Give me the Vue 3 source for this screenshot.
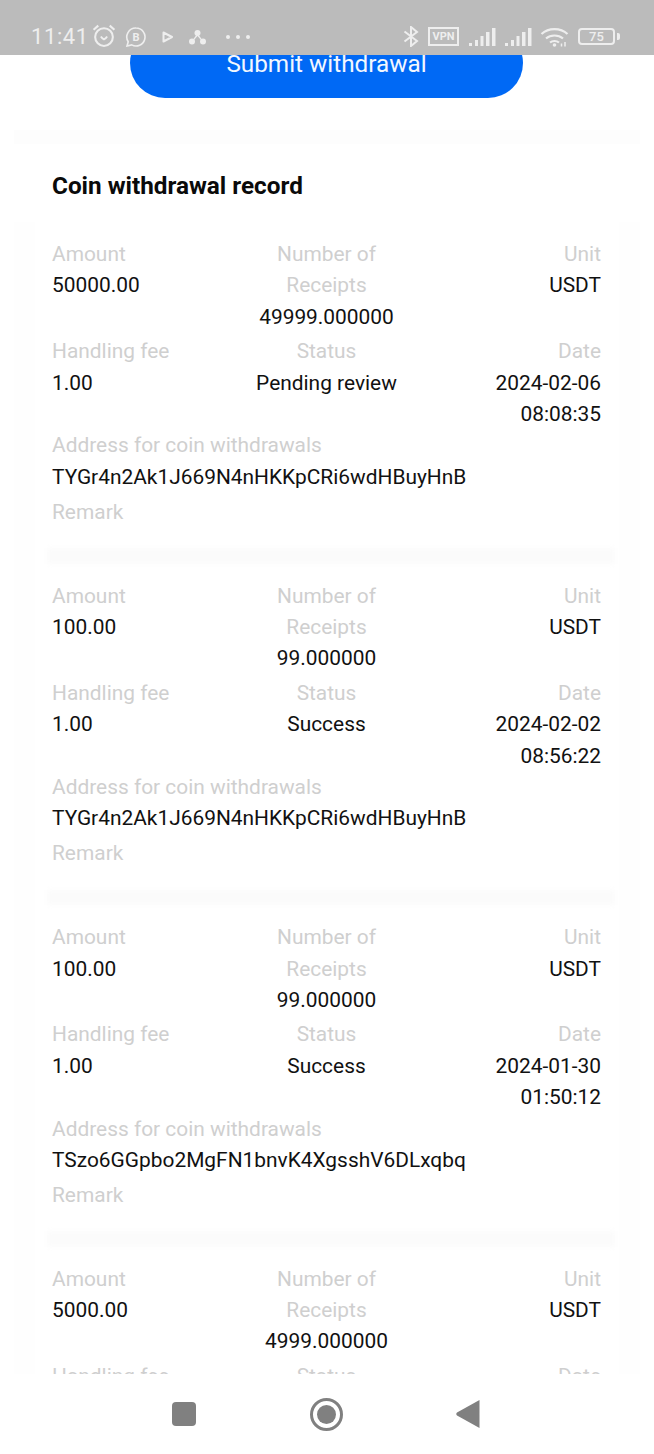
<template>
  <div class="phone">
    <header class="status-bar">
      <span class="time">11:41</span>
      <svg class="ic alarm" width="26" height="25" viewBox="0 0 24 24" fill="none" stroke="#eee" stroke-width="2">
        <circle cx="12" cy="13.5" r="8.5" />
        <path d="M2 6.5 6.5 2.5M22 6.5 17.5 2.5" />
        <path d="M9 13c1 1.6 2 2.4 3 2.8 1-.4 2-1.2 3-2.8" stroke-width="1.8" />
      </svg>
      <svg class="ic bubble" width="22" height="20" viewBox="0 0 22 20" fill="none" stroke="#eee" stroke-width="1.6">
        <path d="M11 1a9 9 0 1 1-4.3 16.9L2 19l1.200-4.200A9 9 0 0 1 11 1z" />
        <text x="11" y="13.500" text-anchor="middle" class="bubble-b">B</text>
      </svg>
      <svg class="ic play" width="12" height="12" viewBox="0 0 12 12" fill="none" stroke="#eee" stroke-width="2">
        <path d="M1.500 1.500 10 6 1.500 10.500z" stroke-linejoin="round" />
      </svg>
      <svg class="ic nodes" width="17" height="16" viewBox="0 0 17 16" fill="#eee">
        <circle cx="8.500" cy="4" r="3" />
        <circle cx="3" cy="12.500" r="3" />
        <circle cx="14" cy="12.500" r="3" />
        <path d="M8 5 3 12l.8.500L8.500 7l4.700 5.500.8-.500L9 5z" />
      </svg>
      <span class="dots">
        <i></i><i></i><i></i>
      </span>
      <span class="spacer"></span>
      <svg class="ic" width="16" height="21" viewBox="0 0 16 21" fill="none" stroke="#eee" stroke-width="2">
        <path d="M1.500 5.500 14 15l-6 5V1l6 5-12.500 9.500" />
      </svg>
      <span class="vpn">VPN</span>
      <svg v-for="n in 2" :key="n" class="ic signal" width="27" height="19" viewBox="0 0 27 19" fill="#eee">
        <rect x="0" y="16" width="3" height="3" />
        <rect x="6" y="13" width="3" height="6" />
        <rect x="11.500" y="9" width="3" height="10" />
        <rect x="17" y="5" width="3.500" height="14" />
        <rect x="23" y="1" width="3.500" height="18" />
      </svg>
      <svg class="ic wifi" width="29" height="20" viewBox="0 0 29 20" fill="none" stroke="#eee" stroke-width="2.200">
        <path d="M1.500 7C8.500.5 20.500.5 27.500 7" />
        <path d="M6 11.500c4.800-4 12.200-4 17 0" />
        <path d="M10 15.500c2.600-2 6.400-2 9 0" />
        <circle cx="14.500" cy="18" r="1.800" fill="#eee" stroke="none" />
        <path d="M21.500 19.500v-3M25 19.500v-4.500" stroke-width="1.500" />
      </svg>
      <span class="battery"><b>75</b></span>
      <span class="battery-tip"></span>
    </header>

    <main class="content">
      <section class="form-card">
        <button class="submit" type="button">Submit withdrawal</button>
      </section>

      <section class="records">
        <h2>Coin withdrawal record</h2>
        <article v-for="r in records" :key="r.id" class="record">
          <div class="row row-a">
            <div>
              <div class="label">Amount</div>
              <div class="value">{{ r.amount }}</div>
            </div>
            <div class="mid">
              <div class="label">Number of Receipts</div>
              <div class="value">{{ r.receipts }}</div>
            </div>
            <div class="end">
              <div class="label">Unit</div>
              <div class="value">USDT</div>
            </div>
          </div>
          <div class="row row-b">
            <div>
              <div class="label">Handling fee</div>
              <div class="value">{{ r.fee }}</div>
            </div>
            <div class="mid">
              <div class="label">Status</div>
              <div class="value">{{ r.status }}</div>
            </div>
            <div class="end">
              <div class="label">Date</div>
              <div class="value">{{ r.date }}</div>
            </div>
          </div>
          <div class="label">Address for coin withdrawals</div>
          <div class="value">{{ r.address }}</div>
          <div class="label remark">Remark</div>
          <div class="band"></div>
        </article>
      </section>
    </main>

    <nav class="nav-bar">
      <span class="nav-square"></span>
      <span class="nav-circle"><i></i></span>
      <svg width="24" height="28" viewBox="0 0 24 28" fill="#808080">
        <path d="M23.500 0v28L1 15.500c-1-.7-1-2.300 0-3z" />
      </svg>
    </nav>
  </div>
</template>

<script setup>
const address1 = 'TYGr4n2Ak1J669N4nHKKpCRi6wdHBuyHnB'

const records = [
  { id: 1, amount: '50000.00', receipts: '49999.000000', fee: '1.00', status: 'Pending review', date: '2024-02-06 08:08:35', address: address1 },
  { id: 2, amount: '100.00', receipts: '99.000000', fee: '1.00', status: 'Success', date: '2024-02-02 08:56:22', address: address1 },
  { id: 3, amount: '100.00', receipts: '99.000000', fee: '1.00', status: 'Success', date: '2024-01-30 01:50:12', address: 'TSzo6GGpbo2MgFN1bnvK4XgsshV6DLxqbq' },
  { id: 4, amount: '5000.00', receipts: '4999.000000', fee: '', status: '', date: '', address: '' },
]
</script>

<style scoped>
.phone {
  width: 654px;
  height: 1454px;
  display: flex;
  flex-direction: column;
  overflow: hidden;
  background: #fff;
  font-family: Roboto, "Liberation Sans", sans-serif;
}

.status-bar {
  flex: none;
  height: 55px;
  box-sizing: border-box;
  padding: 18px 34px 0 31px;
  display: flex;
  align-items: center;
  background: #bbb;
  color: #eee;
}
.time {
  font-size: 22px;
  letter-spacing: 0.6px;
  width: 60px;
}
.ic {
  flex: none;
  display: block;
}
.alarm {
  margin-top: -2px;
}
.bubble {
  margin-left: 8px;
}
.bubble-b {
  font: 700 11px Roboto, sans-serif;
  fill: #eee;
  stroke: none;
}
.play {
  margin-left: 15px;
}
.nodes {
  margin-left: 15px;
}
.dots {
  margin-left: 20px;
  display: flex;
  gap: 6px;
}
.dots i {
  width: 4px;
  height: 4px;
  border-radius: 50%;
  background: #eee;
}
.spacer {
  flex: 1;
}
.vpn {
  margin: 0 10px 0 9px;
  width: 31px;
  height: 19px;
  box-sizing: border-box;
  border: 2px solid #eee;
  font-size: 11px;
  font-weight: 700;
  line-height: 15px;
  text-align: center;
}
.signal {
  margin-right: 9px;
}
.wifi {
  margin-left: -1px;
  margin-right: 9px;
}
.battery {
  width: 37px;
  height: 17px;
  box-sizing: border-box;
  border: 2px solid #eee;
  border-radius: 4px;
  font-size: 13px;
  line-height: 13px;
  text-align: center;
}
.battery b {
  font-weight: 500;
}
.battery-tip {
  width: 3px;
  height: 7px;
  margin-left: 2px;
  background: #eee;
  border-radius: 0 2px 2px 0;
}

.content {
  flex: 1;
  min-height: 0;
  overflow: hidden;
}
.form-card {
  margin: 0 14px;
  padding-bottom: 32px;
  border-bottom: 14px solid #fdfdfd;
}
.submit {
  display: block;
  width: 393px;
  height: 70px;
  margin: -27px 0 0 116px;
  padding: 0;
  border: 0;
  border-radius: 35px;
  background: #0069f5;
  color: #f2f7ff;
  font: 400 24.300px Roboto, sans-serif;
}

.records {
  padding: 26px 14px 0;
}
h2 {
  margin: 0 38px 21px;
  font-size: 24.300px;
  font-weight: 700;
  line-height: 31px;
  color: #0a0a0a;
}
.record {
  padding: 17px 18px 0 17px;
  border: solid #fefefe;
  border-width: 0 21px;
  font-size: 20.900px;
  line-height: 31.400px;
}
.band {
  height: 15.400px;
  margin: 20px -14px 0 -5px;
  background: #fbfbfb;
  filter: blur(2px);
}
.row {
  display: grid;
  grid-template-columns: repeat(3, 1fr);
  column-gap: 14px;
}
.row-a {
  margin-bottom: 3px;
}
.mid {
  text-align: center;
}
.end {
  text-align: right;
}
.label {
  color: #cfcfcf;
}
.value {
  color: #111;
  min-height: 31.400px;
}
.remark {
  margin-top: 3.500px;
}

.nav-bar {
  flex: none;
  height: 80px;
  position: relative;
  z-index: 1;
  display: flex;
  align-items: center;
  background: #fff;
  padding: 0 174px 0 172px;
  justify-content: space-between;
}
.nav-square {
  width: 24px;
  height: 24px;
  border-radius: 4px;
  background: #808080;
}
.nav-circle {
  width: 33px;
  height: 33px;
  box-sizing: border-box;
  border: 3px solid #808080;
  border-radius: 50%;
  display: flex;
  align-items: center;
  justify-content: center;
}
.nav-circle i {
  width: 19px;
  height: 19px;
  border-radius: 50%;
  background: #808080;
}
</style>
